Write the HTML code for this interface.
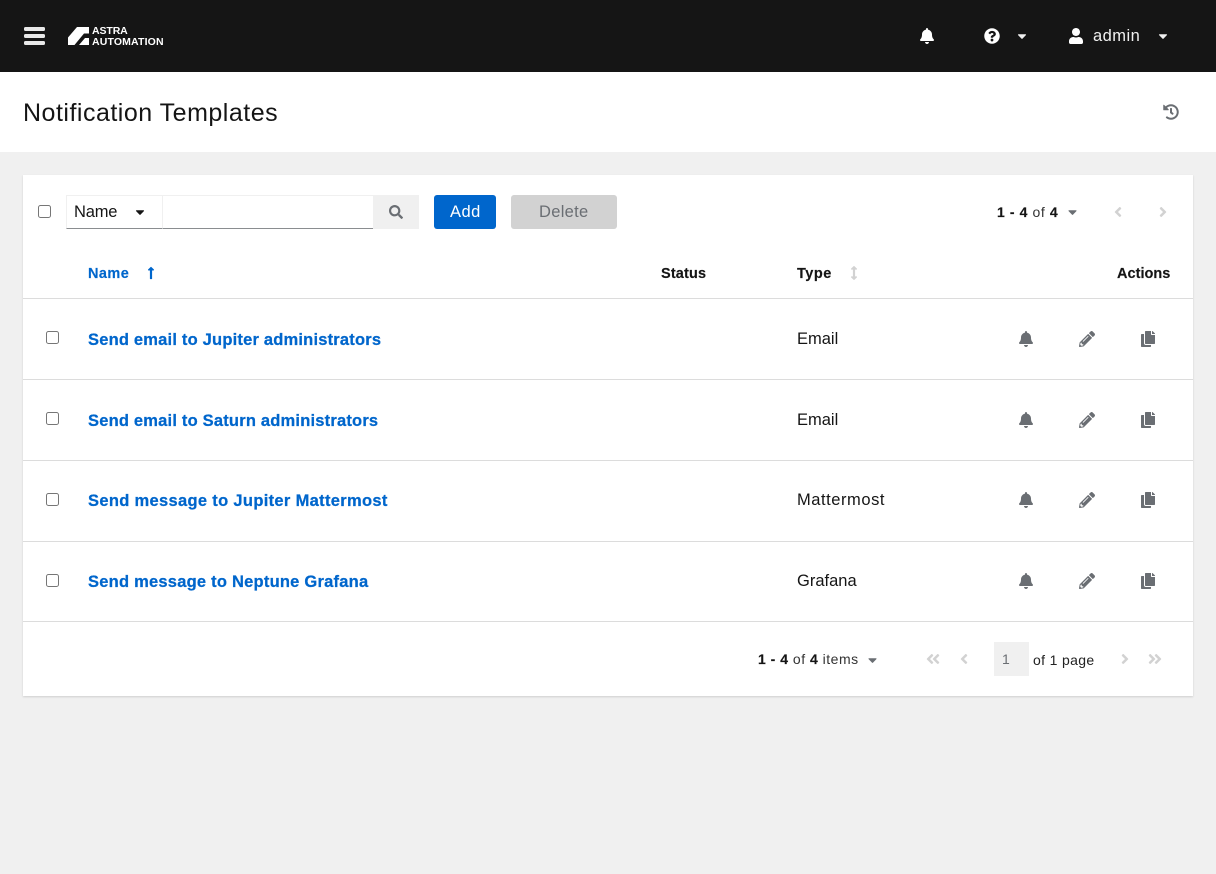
<!DOCTYPE html>
<html><head><meta charset="utf-8"><title>Notification Templates</title>
<style>
html,body{margin:0;padding:0;width:1216px;height:874px;overflow:hidden;background:#f0f0f0;font-family:"Liberation Sans",sans-serif;color:#151515}
.a{position:absolute}
.t{position:absolute;white-space:nowrap;line-height:20px}
svg.i{position:absolute;display:block}
.l{font-weight:700;color:#06c;font-size:16.5px;letter-spacing:.2px;-webkit-text-stroke:.25px #06c}
.h{font-weight:700;font-size:14.5px;letter-spacing:.15px;-webkit-text-stroke:.15px #151515}
.c{font-size:16.5px;letter-spacing:0}
.ln{position:absolute;left:23px;width:1170px;height:1px;background:#dcdcdc}
input{position:absolute;margin:0;width:13px;height:13px}
b{font-weight:700;-webkit-text-stroke:.15px #151515}
</style></head><body>
<svg width="0" height="0" style="position:absolute">
<defs>
<symbol id="bell" viewBox="0 0 448 512"><path d="M224 512c35.32 0 63.97-28.65 63.97-64H160.03c0 35.35 28.65 64 63.97 64zm215.39-149.71c-19.32-20.76-55.47-51.99-55.47-154.29 0-77.7-54.48-139.9-127.94-155.16V32c0-17.67-14.32-32-31.98-32s-31.98 14.33-31.98 32v20.84C118.56 68.1 64.08 130.3 64.08 208c0 102.3-36.15 133.53-55.47 154.29-6 6.45-8.66 14.16-8.61 21.71.11 16.4 12.98 32 32.1 32h383.8c19.12 0 32-15.6 32.1-32 .05-7.55-2.61-15.27-8.61-21.71z"/></symbol>
<symbol id="q" viewBox="0 0 512 512"><path d="M504 256c0 136.997-111.043 248-248 248S8 392.997 8 256C8 119.083 119.043 8 256 8s248 111.083 248 248zM262.655 90c-54.497 0-89.255 22.957-116.549 63.758-3.536 5.286-2.353 12.415 2.715 16.258l34.699 26.31c5.205 3.947 12.621 3.008 16.665-2.122 17.864-22.658 30.113-35.797 57.303-35.797 20.429 0 45.698 13.148 45.698 32.958 0 14.976-12.363 22.667-32.534 33.976C247.128 238.528 216 254.941 216 296v4c0 6.627 5.373 12 12 12h56c6.627 0 12-5.373 12-12v-1.333c0-28.462 83.186-29.647 83.186-106.667 0-58.002-60.165-102-116.531-102zM256 338c-25.365 0-46 20.635-46 46 0 25.364 20.635 46 46 46s46-20.636 46-46c0-25.365-20.635-46-46-46z"/></symbol>
<symbol id="user" viewBox="0 0 448 512"><path d="M224 256c70.7 0 128-57.3 128-128S294.7 0 224 0 96 57.3 96 128s57.3 128 128 128zm89.6 32h-16.7c-22.2 10.2-46.9 16-72.9 16s-50.6-5.8-72.9-16h-16.7C60.2 288 0 348.2 0 422.4V464c0 26.5 21.5 48 48 48h352c26.5 0 48-21.5 48-48v-41.6c0-74.2-60.2-134.4-134.4-134.4z"/></symbol>
<symbol id="search" viewBox="0 0 512 512"><path d="M505 442.7L405.3 343c-4.5-4.5-10.6-7-17-7H372c27.6-35.3 44-79.7 44-128C416 93.1 322.9 0 208 0S0 93.1 0 208s93.1 208 208 208c48.3 0 92.7-16.4 128-44v16.3c0 6.4 2.5 12.5 7 17l99.7 99.7c9.4 9.4 24.6 9.4 33.9 0l28.3-28.3c9.4-9.4 9.4-24.6.1-34zM208 336c-70.7 0-128-57.2-128-128 0-70.7 57.2-128 128-128 70.7 0 128 57.2 128 128 0 70.7-57.2 128-128 128z"/></symbol>
<symbol id="pen" viewBox="0 0 512 512"><path d="M497.9 142.1l-46.1 46.1c-4.7 4.7-12.3 4.7-17 0l-111-111c-4.7-4.7-4.7-12.3 0-17l46.1-46.1c18.7-18.7 49.1-18.7 67.9 0l60.1 60.1c18.8 18.7 18.8 49.1 0 67.9zM284.2 99.8L21.6 362.4.4 483.9c-2.9 16.4 11.4 30.6 27.8 27.8l121.5-21.3 262.6-262.6c4.7-4.7 4.7-12.3 0-17l-111-111c-4.8-4.7-12.4-4.7-17.1 0zM124.1 339.9c-5.5-5.5-5.5-14.3 0-19.8l154-154c5.5-5.5 14.3-5.5 19.8 0s5.5 14.3 0 19.8l-154 154c-5.5 5.5-14.3 5.5-19.8 0zM88 424h48v36.3l-64.5 11.3-31.1-31.1L51.7 376H88v48z"/></symbol>
<symbol id="copy" viewBox="0 0 448 512"><path d="M320 448v40c0 13.255-10.745 24-24 24H24c-13.255 0-24-10.745-24-24V120c0-13.255 10.745-24 24-24h72v296c0 30.879 25.121 56 56 56h168zm0-344V0H152c-13.255 0-24 10.745-24 24v368c0 13.255 10.745 24 24 24h272c13.255 0 24-10.745 24-24V128H344c-13.2 0-24-10.8-24-24zm120.971-31.029L375.029 7.029A24 24 0 0 0 358.059 0H352v96h96v-6.059a24 24 0 0 0-7.029-16.97z"/></symbol>
<symbol id="hist" viewBox="0 0 512 512"><path d="M504 255.531c.253 136.64-111.18 248.372-247.82 248.468-59.015.042-113.223-20.53-155.822-54.911-11.077-8.94-11.905-25.541-1.839-35.607l11.267-11.267c8.609-8.609 22.353-9.551 31.891-1.984C173.062 425.135 212.781 440 256 440c101.705 0 184-82.311 184-184 0-101.705-82.311-184-184-184-48.814 0-93.149 18.969-126.068 49.932l50.754 50.754c10.08 10.08 2.941 27.314-11.313 27.314H24c-8.837 0-16-7.163-16-16V38.627c0-14.254 17.234-21.393 27.314-11.314l49.372 49.372C129.209 34.136 189.552 8 256 8c136.81 0 247.747 110.78 248 247.531zm-180.912 78.784l9.823-12.63c8.138-10.463 6.253-25.542-4.21-33.679L288 256.349V152c0-13.255-10.745-24-24-24h-16c-13.255 0-24 10.745-24 24v135.651l65.409 50.874c10.463 8.137 25.541 6.253 33.679-4.21z"/></symbol>
<symbol id="caret" viewBox="0 0 320 512"><path d="M31.3 192h257.3c17.8 0 26.7 21.5 14.1 34.1L174.1 354.8c-7.8 7.8-20.5 7.8-28.3 0L17.2 226.1C4.6 213.5 13.5 192 31.3 192z"/></symbol>
<symbol id="al" viewBox="0 0 256 512"><path d="M31.7 239l136-136c9.4-9.4 24.6-9.4 33.9 0l22.6 22.6c9.4 9.4 9.4 24.6 0 33.9L127.9 256l96.4 96.4c9.4 9.4 9.4 24.6 0 33.9L201.7 409c-9.4 9.4-24.6 9.4-33.9 0l-136-136c-9.5-9.4-9.5-24.6-.1-34z"/></symbol>
<symbol id="ar" viewBox="0 0 256 512"><path d="M224.3 273l-136 136c-9.4 9.4-24.6 9.4-33.9 0l-22.6-22.6c-9.4-9.4-9.4-24.6 0-33.9l96.4-96.4-96.4-96.4c-9.4-9.4-9.4-24.6 0-33.9L54.3 103c9.4-9.4 24.6-9.4 33.9 0l136 136c9.5 9.4 9.5 24.6.1 34z"/></symbol>
<symbol id="dl" viewBox="0 0 448 512"><path d="M223.7 239l136-136c9.4-9.4 24.6-9.4 33.9 0l22.6 22.6c9.4 9.4 9.4 24.6 0 33.9L319.9 256l96.4 96.4c9.4 9.4 9.4 24.6 0 33.9L393.7 409c-9.4 9.4-24.6 9.4-33.9 0l-136-136c-9.5-9.4-9.5-24.6-.1-34zm-192 34l136 136c9.4 9.4 24.6 9.4 33.9 0l22.6-22.6c9.4-9.4 9.4-24.6 0-33.9L127.9 256l96.4-96.4c9.4-9.4 9.4-24.6 0-33.9L201.7 103c-9.4-9.4-24.6-9.4-33.9 0l-136 136c-9.5 9.4-9.5 24.6-.1 34z"/></symbol>
<symbol id="dr" viewBox="0 0 448 512"><path d="M224.3 273l-136 136c-9.4 9.4-24.6 9.4-33.9 0l-22.6-22.6c-9.4-9.4-9.4-24.6 0-33.9l96.4-96.4-96.4-96.4c-9.4-9.4-9.4-24.6 0-33.9L54.3 103c9.4-9.4 24.6-9.4 33.9 0l136 136c9.5 9.4 9.5 24.6.1 34zm192-34l-136-136c-9.4-9.4-24.6-9.4-33.9 0l-22.6 22.6c-9.4 9.4-9.4 24.6 0 33.9l96.4 96.4-96.4 96.4c-9.4 9.4-9.4 24.6 0 33.9l22.6 22.6c9.4 9.4 24.6 9.4 33.9 0l136-136c9.4-9.2 9.4-24.4 0-33.8z"/></symbol>
<symbol id="up" viewBox="0 0 256 512"><path d="M88 166.059V468c0 6.627 5.373 12 12 12h56c6.627 0 12-5.373 12-12V166.059h46.059c21.382 0 32.09-25.851 16.971-40.971l-86.059-86.059c-9.373-9.373-24.569-9.373-33.941 0l-86.059 86.059c-15.119 15.119-4.411 40.971 16.971 40.971H88z"/></symbol>
<symbol id="ud" viewBox="0 0 256 512"><path d="M214.059 377.941H168V134.059h46.059c21.382 0 32.09-25.851 16.971-40.971L144.971 7.029c-9.373-9.373-24.569-9.373-33.941 0L24.971 93.088c-15.119 15.119-4.411 40.971 16.971 40.971H88v243.882H41.941c-21.382 0-32.09 25.851-16.971 40.971l86.059 86.059c9.373 9.373 24.569 9.373 33.941 0l86.059-86.059c15.12-15.119 4.412-40.971-16.97-40.971z"/></symbol>
</defs></svg>

<!-- header -->
<div class="a" style="left:0;top:0;width:1216px;height:72px;background:#151515"></div>
<div class="a" style="left:24px;top:27px;width:21px;height:4px;background:#e8e8e8;border-radius:1.5px"></div>
<div class="a" style="left:24px;top:34px;width:21px;height:4px;background:#e8e8e8;border-radius:1.5px"></div>
<div class="a" style="left:24px;top:41px;width:21px;height:4px;background:#e8e8e8;border-radius:1.5px"></div>
<svg class="i" style="left:0;top:0" width="100" height="60" fill="#fff"><path d="M68 37.5L77 27H89V33.5H84L74.5 45H68Z"/><path d="M79 45L85 38H89V45Z"/></svg>
<div class="t" style="left:92px;top:20.5px;font-size:10.5px;font-weight:700;color:#fff;letter-spacing:-.1px">ASTRA</div>
<div class="t" style="left:92px;top:31.5px;font-size:10.5px;font-weight:700;color:#fff;letter-spacing:.15px">AUTOMATION</div>
<svg class="i" style="left:920px;top:28px;fill:#fff" width="14" height="16"><use href="#bell"/></svg>
<svg class="i" style="left:984px;top:28px;fill:#fff" width="16" height="16"><use href="#q"/></svg>
<svg class="i" style="left:1017px;top:29px;fill:#f0f0f0" width="10" height="14"><use href="#caret"/></svg>
<svg class="i" style="left:1069px;top:28px;fill:#fff" width="14" height="16"><use href="#user"/></svg>
<div class="t" style="left:1093px;top:26px;font-size:16.5px;color:#f0f0f0;letter-spacing:.45px">admin</div>
<svg class="i" style="left:1158px;top:29px;fill:#f0f0f0" width="10" height="14"><use href="#caret"/></svg>

<!-- title bar -->
<div class="a" style="left:0;top:72px;width:1216px;height:80px;background:#fff"></div>
<div class="t" style="left:23px;top:103px;font-size:25px;letter-spacing:.5px;color:#151515">Notification Templates</div>
<svg class="i" style="left:1163px;top:104px;fill:#6a6e73" width="16" height="16"><use href="#hist"/></svg>

<!-- card -->
<div class="a" style="left:23px;top:175px;width:1170px;height:521px;background:#fff;box-shadow:0 1px 2px rgba(3,3,3,.14)"></div>

<!-- toolbar -->
<input type="checkbox" style="left:38px;top:205px">
<div class="a" style="left:66px;top:195px;width:95px;height:32px;border-top:1px solid #f0f0f0;border-left:1px solid #f0f0f0;border-right:1px solid #f0f0f0;border-bottom:1px solid #8a8d90"></div>
<div class="a" style="left:163px;top:195px;width:210px;height:32px;border-top:1px solid #f0f0f0;border-bottom:1px solid #8a8d90"></div>
<div class="t" style="left:74px;top:202px;font-size:16.5px;letter-spacing:-.2px">Name</div>
<svg class="i" style="left:135px;top:205px;fill:#151515" width="10" height="14"><use href="#caret"/></svg>
<div class="a" style="left:373px;top:195px;width:46px;height:34px;background:#f0f0f0"></div>
<svg class="i" style="left:389px;top:204.5px;fill:#6a6e73" width="14" height="14"><use href="#search"/></svg>
<div class="a" style="left:434px;top:195px;width:62px;height:34px;background:#06c;border-radius:3px"></div>
<div class="t" style="left:450px;top:202px;font-size:16.5px;color:#fff;letter-spacing:.45px">Add</div>
<div class="a" style="left:511px;top:195px;width:106px;height:34px;background:#d2d2d2;border-radius:3px"></div>
<div class="t" style="left:539px;top:202px;font-size:16.5px;color:#6a6e73;letter-spacing:.3px">Delete</div>

<div class="t" style="left:997px;top:202px;font-size:14px;letter-spacing:.6px"><b>1 - 4</b> <span style="color:#333">of</span> <b>4</b></div>
<svg class="i" style="left:1068px;top:205px;fill:#6a6e73" width="9" height="14"><use href="#caret"/></svg>
<svg class="i" style="left:1114px;top:204px;fill:#d2d2d2" width="8" height="16"><use href="#al"/></svg>
<svg class="i" style="left:1159px;top:204px;fill:#d2d2d2" width="8" height="16"><use href="#ar"/></svg>

<!-- table header -->
<div class="t h" style="left:88px;top:264px;color:#06c;letter-spacing:.45px;-webkit-text-stroke:.15px #06c">Name</div>
<svg class="i" style="left:147px;top:266px;fill:#06c" width="8" height="14"><use href="#up"/></svg>
<div class="t h" style="left:661px;top:264px">Status</div>
<div class="t h" style="left:797px;top:264px;letter-spacing:.5px">Type</div>
<svg class="i" style="left:850px;top:266px;fill:#d2d2d2" width="8" height="14"><use href="#ud"/></svg>
<div class="t h" style="left:1117px;top:264px;letter-spacing:.03px">Actions</div>

<div class="ln" style="top:298px"></div>
<div class="ln" style="top:379px"></div>
<div class="ln" style="top:460px"></div>
<div class="ln" style="top:541px"></div>
<div class="ln" style="top:621px"></div>

<!-- row 1 -->
<input type="checkbox" style="left:46px;top:331px">
<div class="t l" style="left:88px;top:330px">Send email to Jupiter administrators</div>
<div class="t c" style="left:797px;top:329px">Email</div>
<svg class="i" style="left:1019px;top:331px;fill:#6a6e73" width="14" height="16"><use href="#bell"/></svg>
<svg class="i" style="left:1079px;top:331px;fill:#6a6e73" width="16" height="16"><use href="#pen"/></svg>
<svg class="i" style="left:1141px;top:331px;fill:#6a6e73" width="14" height="16"><use href="#copy"/></svg>
<!-- row 2 -->
<input type="checkbox" style="left:46px;top:412px">
<div class="t l" style="left:88px;top:411px">Send email to Saturn administrators</div>
<div class="t c" style="left:797px;top:410px">Email</div>
<svg class="i" style="left:1019px;top:412px;fill:#6a6e73" width="14" height="16"><use href="#bell"/></svg>
<svg class="i" style="left:1079px;top:412px;fill:#6a6e73" width="16" height="16"><use href="#pen"/></svg>
<svg class="i" style="left:1141px;top:412px;fill:#6a6e73" width="14" height="16"><use href="#copy"/></svg>
<!-- row 3 -->
<input type="checkbox" style="left:46px;top:493px">
<div class="t l" style="left:88px;top:491px;letter-spacing:.32px">Send message to Jupiter Mattermost</div>
<div class="t c" style="left:797px;top:490px;letter-spacing:.55px">Mattermost</div>
<svg class="i" style="left:1019px;top:492px;fill:#6a6e73" width="14" height="16"><use href="#bell"/></svg>
<svg class="i" style="left:1079px;top:492px;fill:#6a6e73" width="16" height="16"><use href="#pen"/></svg>
<svg class="i" style="left:1141px;top:492px;fill:#6a6e73" width="14" height="16"><use href="#copy"/></svg>
<!-- row 4 -->
<input type="checkbox" style="left:46px;top:574px">
<div class="t l" style="left:88px;top:572px;letter-spacing:.23px">Send message to Neptune Grafana</div>
<div class="t c" style="left:797px;top:571px">Grafana</div>
<svg class="i" style="left:1019px;top:573px;fill:#6a6e73" width="14" height="16"><use href="#bell"/></svg>
<svg class="i" style="left:1079px;top:573px;fill:#6a6e73" width="16" height="16"><use href="#pen"/></svg>
<svg class="i" style="left:1141px;top:573px;fill:#6a6e73" width="14" height="16"><use href="#copy"/></svg>

<!-- footer pagination -->
<div class="t" style="left:758px;top:649px;font-size:14px;letter-spacing:.5px"><b>1 - 4</b> <span style="color:#333">of</span> <b>4</b> <span style="color:#333">items</span></div>
<svg class="i" style="left:868px;top:653px;fill:#6a6e73" width="9" height="14"><use href="#caret"/></svg>
<svg class="i" style="left:926px;top:651px;fill:#d2d2d2" width="14" height="16"><use href="#dl"/></svg>
<svg class="i" style="left:960px;top:651px;fill:#d2d2d2" width="8" height="16"><use href="#al"/></svg>
<div class="a" style="left:994px;top:642px;width:35px;height:34px;background:#f0f0f0"></div>
<div class="t" style="left:1002px;top:649px;font-size:14px;color:#6a6e73">1</div>
<div class="t" style="left:1033px;top:650px;font-size:14px;letter-spacing:.35px;color:#222">of 1 page</div>
<svg class="i" style="left:1121px;top:651px;fill:#d2d2d2" width="8" height="16"><use href="#ar"/></svg>
<svg class="i" style="left:1148px;top:651px;fill:#d2d2d2" width="14" height="16"><use href="#dr"/></svg>
</body></html>
